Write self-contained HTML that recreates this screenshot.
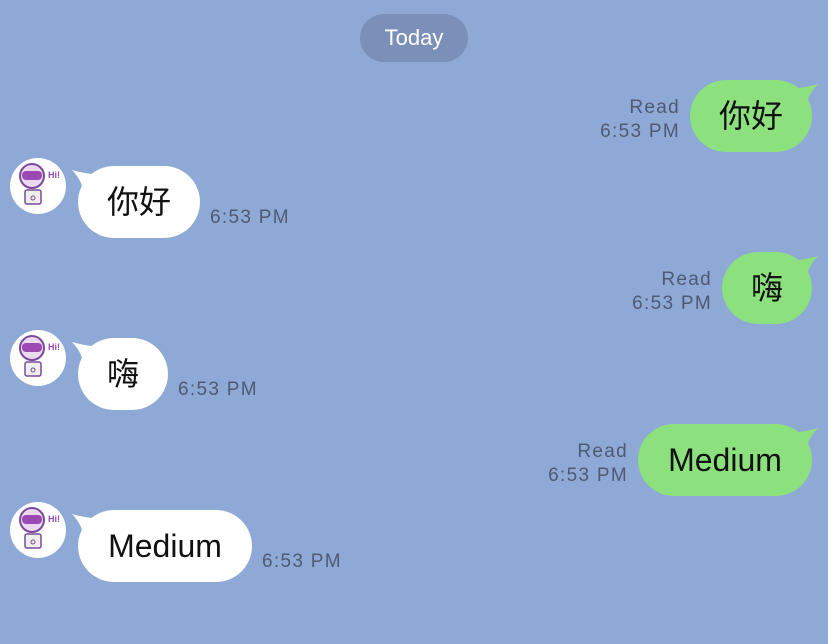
<!DOCTYPE html><html><head><meta charset="utf-8"><style>
body{margin:0;width:828px;height:644px;background:#8fa9d6;position:relative;overflow:hidden;font-family:"Liberation Sans","Noto Sans CJK SC",sans-serif}
.pill{position:absolute;left:360px;top:14px;width:108px;height:48px;border-radius:24px;background:#7a90b8;color:#fff;font-size:22px;line-height:48px;text-align:center}
.b{position:absolute;height:72px;border-radius:36px;font-size:32px;line-height:72px;text-align:center;color:#111}
.g{background:#8ce07e}.w{background:#fff}
.t{position:absolute;font-size:19px;color:#4e5a74;line-height:24px;letter-spacing:1.3px}
.r{text-align:right}
.av{position:absolute;left:10px;width:56px;height:56px;border-radius:50%;background:#fff}
svg.tail{position:absolute}
</style></head><body>
<div class="pill">Today</div>

<svg class="tail" style="left:780px;top:80px" width="40" height="30"><path d="M0 10 Q25 8 38 4 Q28 14 26 28 Z" fill="#8ce07e"/></svg>
<div class="b g" style="left:690px;top:80px;width:122px">你好</div>
<div class="t r" style="left:560px;top:96px;width:120px">Read<br>6:53 PM</div>

<div class="av" style="top:158px"><svg width="56" height="56" viewBox="0 0 56 56"><circle cx="22" cy="18" r="12" fill="#e8d8f0" stroke="#7a4a9a" stroke-width="2"/><rect x="12" y="13" width="20" height="9" rx="4" fill="#9a4ab0"/><rect x="15" y="32" width="16" height="14" rx="2" fill="#eee" stroke="#7a4a9a" stroke-width="1.5"/><circle cx="23" cy="40" r="2" fill="none" stroke="#7a4a9a"/><text x="38" y="20" font-size="9" font-weight="bold" fill="#9a4ab0">Hi!</text></svg></div>
<svg class="tail" style="left:70px;top:166px" width="40" height="30"><path d="M40 10 Q15 8 2 4 Q12 14 14 28 Z" fill="#fff"/></svg>
<div class="b w" style="left:78px;top:166px;width:122px">你好</div>
<div class="t" style="left:210px;top:206px">6:53 PM</div>

<svg class="tail" style="left:780px;top:252px" width="40" height="30"><path d="M0 10 Q25 8 38 4 Q28 14 26 28 Z" fill="#8ce07e"/></svg>
<div class="b g" style="left:722px;top:252px;width:90px">嗨</div>
<div class="t r" style="left:592px;top:268px;width:120px">Read<br>6:53 PM</div>

<div class="av" style="top:330px"><svg width="56" height="56" viewBox="0 0 56 56"><circle cx="22" cy="18" r="12" fill="#e8d8f0" stroke="#7a4a9a" stroke-width="2"/><rect x="12" y="13" width="20" height="9" rx="4" fill="#9a4ab0"/><rect x="15" y="32" width="16" height="14" rx="2" fill="#eee" stroke="#7a4a9a" stroke-width="1.5"/><circle cx="23" cy="40" r="2" fill="none" stroke="#7a4a9a"/><text x="38" y="20" font-size="9" font-weight="bold" fill="#9a4ab0">Hi!</text></svg></div>
<svg class="tail" style="left:70px;top:338px" width="40" height="30"><path d="M40 10 Q15 8 2 4 Q12 14 14 28 Z" fill="#fff"/></svg>
<div class="b w" style="left:78px;top:338px;width:90px">嗨</div>
<div class="t" style="left:178px;top:378px">6:53 PM</div>

<svg class="tail" style="left:780px;top:424px" width="40" height="30"><path d="M0 10 Q25 8 38 4 Q28 14 26 28 Z" fill="#8ce07e"/></svg>
<div class="b g" style="left:638px;top:424px;width:174px">Medium</div>
<div class="t r" style="left:508px;top:440px;width:120px">Read<br>6:53 PM</div>

<div class="av" style="top:502px"><svg width="56" height="56" viewBox="0 0 56 56"><circle cx="22" cy="18" r="12" fill="#e8d8f0" stroke="#7a4a9a" stroke-width="2"/><rect x="12" y="13" width="20" height="9" rx="4" fill="#9a4ab0"/><rect x="15" y="32" width="16" height="14" rx="2" fill="#eee" stroke="#7a4a9a" stroke-width="1.5"/><circle cx="23" cy="40" r="2" fill="none" stroke="#7a4a9a"/><text x="38" y="20" font-size="9" font-weight="bold" fill="#9a4ab0">Hi!</text></svg></div>
<svg class="tail" style="left:70px;top:510px" width="40" height="30"><path d="M40 10 Q15 8 2 4 Q12 14 14 28 Z" fill="#fff"/></svg>
<div class="b w" style="left:78px;top:510px;width:174px">Medium</div>
<div class="t" style="left:262px;top:550px">6:53 PM</div>
</body></html>
